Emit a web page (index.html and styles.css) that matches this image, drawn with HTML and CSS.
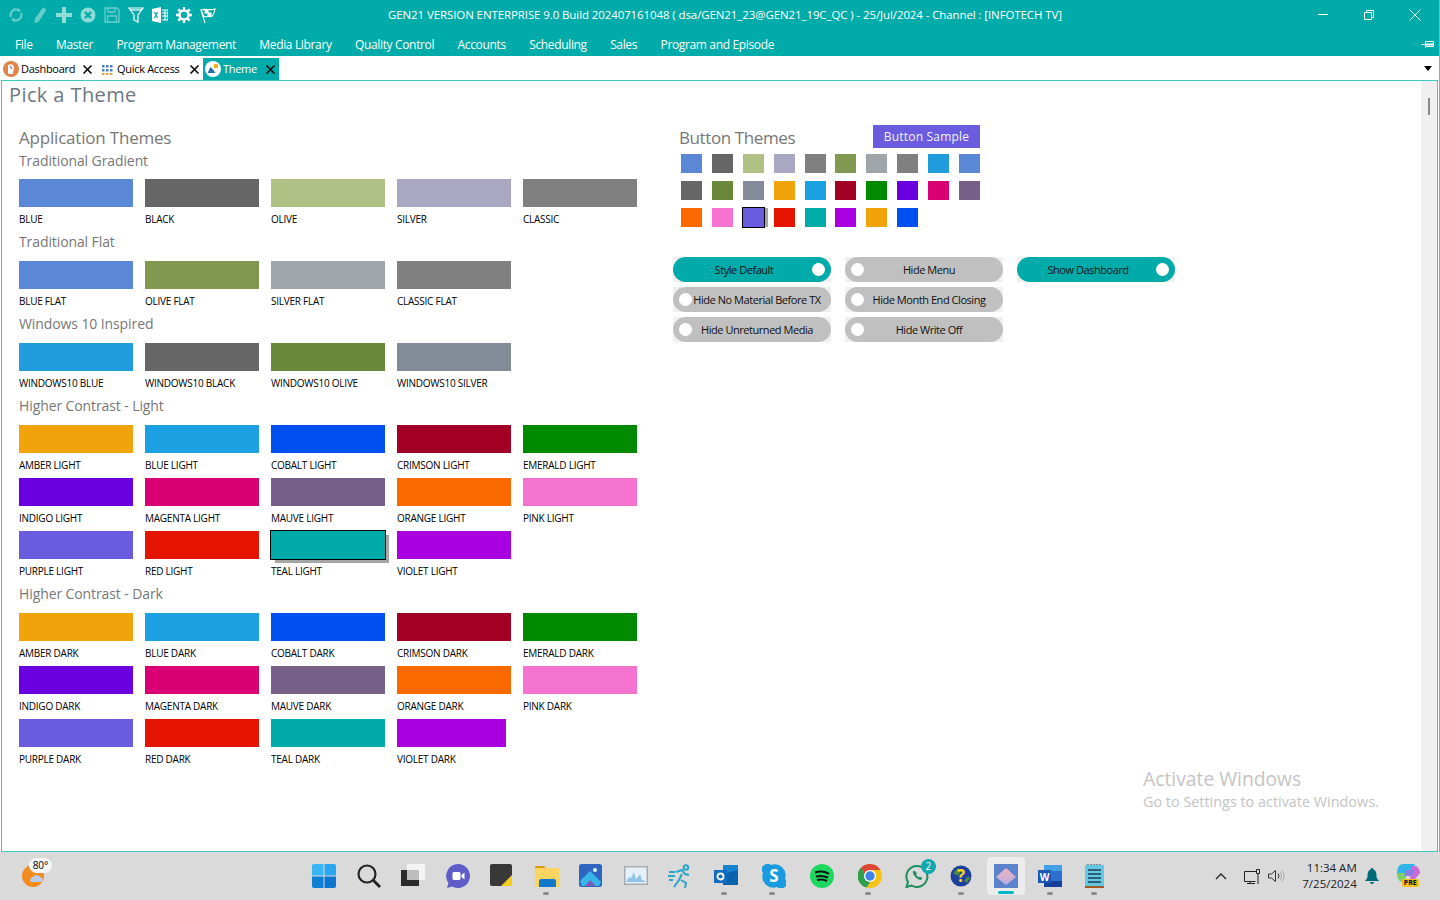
FILE: index.html
```html
<!DOCTYPE html>
<html lang="en">
<head>
<meta charset="utf-8">
<title>Theme</title>
<link rel="stylesheet" href="styles.css">
</head>
<body>
<div class="app">
  <header class="titlebar">
    <div class="tools">
      <svg class="tool" viewBox="0 0 16 16" fill="none" stroke="#66cdcb" stroke-width="2.2"><path d="M3 10a5.5 5.5 0 0 1 8.5-6.3"/><path d="M13 6a5.5 5.5 0 0 1-8.5 6.3"/><path d="M10 1l3 3-3.6 1z" fill="#66cdcb" stroke="none"/><path d="M6 15l-3-3 3.6-1z" fill="#66cdcb" stroke="none"/></svg>
      <svg class="tool" viewBox="0 0 16 16" fill="#66cdcb"><path d="M11 .5l3.500 2-8 12.500-4 1 .5-4.500z"/></svg>
      <svg class="tool" viewBox="0 0 16 16" fill="#8fdcd9"><path d="M6 0h4v6h6v4h-6v6H6v-6H0V6h6z"/></svg>
      <svg class="tool" viewBox="0 0 16 16"><circle cx="8" cy="8" r="7.5" fill="#8fdcd9"/><path d="M5 5l6 6M11 5l-6 6" stroke="#00aba9" stroke-width="2.4"/></svg>
      <svg class="tool" viewBox="0 0 16 16" fill="none" stroke="#66cdcb" stroke-width="1.3"><path d="M1 1h12l2 2v12H1z"/><path d="M4 1v4h7V1M3.500 15V9h9v6"/></svg>
      <svg class="tool" viewBox="0 0 16 16" fill="none" stroke="#fff" stroke-width="1.2"><path d="M1 1h14L10 8v7l-4-2V8z"/><path d="M3 3h10"/></svg>
      <svg class="tool" viewBox="0 0 16 16"><path d="M0 2l9-2v16l-9-2z" fill="#fff"/><path d="M2.500 5l3 6M5.500 5l-3 6" stroke="#00aba9" stroke-width="1.2"/><path d="M10 3h6v10h-6M10 6h6M10 9h6M13 3v10" fill="none" stroke="#fff" stroke-width="1.1"/></svg>
      <svg class="tool" viewBox="0 0 16 16"><circle cx="8" cy="8" r="4.500" fill="none" stroke="#fff" stroke-width="2.600"/><path d="M8 0v3M8 13v3M0 8h3M13 8h3M2.300 2.300l2 2M11.700 11.700l2 2M13.700 2.300l-2 2M4.300 11.700l-2 2" stroke="#fff" stroke-width="2.400"/></svg>
      <svg class="tool" viewBox="0 0 16 16" fill="none" stroke="#fff" stroke-width="1.1"><path d="M1 3c4-2 9 1 14-1-.5 3-1.200 5-2.500 7-3 1-6 0-8.500 1z"/><path d="M1 3l4 13"/><path d="M5 3.500h3v2.500h-3zM8 6h3v2.500h-3z" fill="#fff"/></svg>
    </div>
    <div class="app-title">GEN21 VERSION ENTERPRISE 9.0 Build 202407161048 ( dsa/GEN21_23@GEN21_19C_QC ) - 25/Jul/2024 - Channel : [INFOTECH TV]</div>
    <div class="win-controls">
      <svg class="win-btn" viewBox="0 0 12 12" stroke="#fff" fill="none"><path d="M1 5.500h10"/></svg>
      <svg class="win-btn" viewBox="0 0 12 12" stroke="#fff" fill="none"><path d="M1.500 3.500h7v7h-7zM3.500 3.500v-2h7v7h-2"/></svg>
      <svg class="win-btn" viewBox="0 0 12 12" stroke="#e0f5f4" fill="none"><path d="M.5.5l11 11M11.500.5l-11 11"/></svg>
    </div>
  </header>
  <nav class="menubar">
    <span>File</span><span>Master</span><span>Program Management</span><span>Media Library</span><span>Quality Control</span><span>Accounts</span><span>Scheduling</span><span>Sales</span><span>Program and Episode</span>
    <svg class="pin" viewBox="0 0 13 8" fill="none" stroke="#fff"><path d="M0 4.500h4M4.500 1v7M4.500 1.500h8v5h-8" /><path d="M5 4.500h7" stroke-width="2"/></svg>
  </nav>
  <div class="tabbar">
    <div class="tab tab-dash">
      <svg class="tab-icon" viewBox="0 0 16 16"><circle cx="8" cy="8" r="8" fill="#e38344"/><path d="M5 13V4l4-1 2 3-1 7z" fill="#fff"/><path d="M7.500 5l1 3" stroke="#557" stroke-width="1"/></svg>
      <span class="tab-text">Dashboard</span><svg class="tab-x" viewBox="0 0 9 9" stroke="#000" stroke-width="1.500" fill="none"><path d="M.5.5l8 8M8.500.5l-8 8"/></svg>
    </div>
    <div class="tab tab-quick">
      <svg class="tab-icon small" viewBox="0 0 11 11" fill="#4a7fc4"><path d="M0 1h2.500v2.500H0zM4 1h2.500v2.500H4zM8 1h2.500v2.500H8zM0 5h2.500v2.500H0zM4 5h2.500v2.500H4zM8 5h2.500v2.500H8z"/><path fill="#d9a14a" d="M0 9h2.500v2H0zM4 9h2.500v2H4zM8 9h2.500v2H8z"/></svg>
      <span class="tab-text">Quick Access</span><svg class="tab-x" viewBox="0 0 9 9" stroke="#000" stroke-width="1.500" fill="none"><path d="M.5.5l8 8M8.500.5l-8 8"/></svg>
    </div>
    <div class="tab tab-theme">
      <svg class="tab-icon" viewBox="0 0 16 16"><circle cx="8" cy="8" r="8" fill="#fff"/><path d="M2.500 12l3-6 3 3 2 3z" fill="#2f6db5"/><path d="M9 3h4v4H9z" fill="#f1b31c"/></svg>
      <span class="tab-text">Theme</span><svg class="tab-x" viewBox="0 0 9 9" stroke="#000" stroke-width="1.500" fill="none"><path d="M.5.5l8 8M8.500.5l-8 8"/></svg>
    </div>
    <svg class="tab-menu" viewBox="0 0 8 5" fill="#000"><path d="M0 0h8L4 5z"/></svg>
  </div>
  <main class="frame">
    <div class="content">
      <h1 class="page-title">Pick a Theme</h1>
      <div class="columns">
        <section class="col-left">
          <h2 class="heading">Application Themes</h2>
          <h3 class="sub sub-first">Traditional Gradient</h3>
          <div class="grid">
            <div class="item"><div class="sw blue"></div><div class="lbl">BLUE</div></div>
            <div class="item"><div class="sw black"></div><div class="lbl">BLACK</div></div>
            <div class="item"><div class="sw olive"></div><div class="lbl">OLIVE</div></div>
            <div class="item"><div class="sw silver"></div><div class="lbl">SILVER</div></div>
            <div class="item"><div class="sw classic"></div><div class="lbl">CLASSIC</div></div>
          </div>
          <h3 class="sub">Traditional Flat</h3>
          <div class="grid">
            <div class="item"><div class="sw blue"></div><div class="lbl">BLUE FLAT</div></div>
            <div class="item"><div class="sw olive-flat"></div><div class="lbl">OLIVE FLAT</div></div>
            <div class="item"><div class="sw silver-flat"></div><div class="lbl">SILVER FLAT</div></div>
            <div class="item"><div class="sw classic"></div><div class="lbl">CLASSIC FLAT</div></div>
          </div>
          <h3 class="sub">Windows 10 Inspired</h3>
          <div class="grid">
            <div class="item"><div class="sw win-blue"></div><div class="lbl">WINDOWS10 BLUE</div></div>
            <div class="item"><div class="sw black"></div><div class="lbl">WINDOWS10 BLACK</div></div>
            <div class="item"><div class="sw win-olive"></div><div class="lbl">WINDOWS10 OLIVE</div></div>
            <div class="item"><div class="sw win-silver"></div><div class="lbl">WINDOWS10 SILVER</div></div>
          </div>
          <h3 class="sub">Higher Contrast - Light</h3>
          <div class="grid">
            <div class="item"><div class="sw amber"></div><div class="lbl">AMBER LIGHT</div></div>
            <div class="item"><div class="sw sky"></div><div class="lbl">BLUE LIGHT</div></div>
            <div class="item"><div class="sw cobalt"></div><div class="lbl">COBALT LIGHT</div></div>
            <div class="item"><div class="sw crimson"></div><div class="lbl">CRIMSON LIGHT</div></div>
            <div class="item"><div class="sw emerald"></div><div class="lbl">EMERALD LIGHT</div></div>
            <div class="item"><div class="sw indigo"></div><div class="lbl">INDIGO LIGHT</div></div>
            <div class="item"><div class="sw magenta"></div><div class="lbl">MAGENTA LIGHT</div></div>
            <div class="item"><div class="sw mauve"></div><div class="lbl">MAUVE LIGHT</div></div>
            <div class="item"><div class="sw orange"></div><div class="lbl">ORANGE LIGHT</div></div>
            <div class="item"><div class="sw pink"></div><div class="lbl">PINK LIGHT</div></div>
            <div class="item"><div class="sw purple"></div><div class="lbl">PURPLE LIGHT</div></div>
            <div class="item"><div class="sw red"></div><div class="lbl">RED LIGHT</div></div>
            <div class="item"><div class="sw teal selected"></div><div class="lbl">TEAL LIGHT</div></div>
            <div class="item"><div class="sw violet"></div><div class="lbl">VIOLET LIGHT</div></div>
          </div>
          <h3 class="sub">Higher Contrast - Dark</h3>
          <div class="grid">
            <div class="item"><div class="sw amber"></div><div class="lbl">AMBER DARK</div></div>
            <div class="item"><div class="sw sky"></div><div class="lbl">BLUE DARK</div></div>
            <div class="item"><div class="sw cobalt"></div><div class="lbl">COBALT DARK</div></div>
            <div class="item"><div class="sw crimson"></div><div class="lbl">CRIMSON DARK</div></div>
            <div class="item"><div class="sw emerald"></div><div class="lbl">EMERALD DARK</div></div>
            <div class="item"><div class="sw indigo"></div><div class="lbl">INDIGO DARK</div></div>
            <div class="item"><div class="sw magenta"></div><div class="lbl">MAGENTA DARK</div></div>
            <div class="item"><div class="sw mauve"></div><div class="lbl">MAUVE DARK</div></div>
            <div class="item"><div class="sw orange"></div><div class="lbl">ORANGE DARK</div></div>
            <div class="item"><div class="sw pink"></div><div class="lbl">PINK DARK</div></div>
            <div class="item"><div class="sw purple"></div><div class="lbl">PURPLE DARK</div></div>
            <div class="item"><div class="sw red"></div><div class="lbl">RED DARK</div></div>
            <div class="item"><div class="sw teal"></div><div class="lbl">TEAL DARK</div></div>
            <div class="item"><div class="sw violet narrow"></div><div class="lbl">VIOLET DARK</div></div>
          </div>
        </section>
        <section class="col-right">
          <div class="btn-head">
            <h2 class="heading heading-btn">Button Themes</h2>
            <div class="btn-sample">Button Sample</div>
          </div>
          <div class="mini-grid">
            <div class="sw blue"></div><div class="sw black"></div><div class="sw olive"></div><div class="sw silver"></div><div class="sw classic"></div><div class="sw olive-flat"></div><div class="sw silver-flat"></div><div class="sw classic"></div><div class="sw win-blue"></div><div class="sw blue"></div>
            <div class="sw black"></div><div class="sw win-olive"></div><div class="sw win-silver"></div><div class="sw amber"></div><div class="sw sky"></div><div class="sw crimson"></div><div class="sw emerald"></div><div class="sw indigo"></div><div class="sw magenta"></div><div class="sw mauve"></div>
            <div class="sw orange"></div><div class="sw pink"></div><div class="sw purple selected"></div><div class="sw red"></div><div class="sw teal"></div><div class="sw violet"></div><div class="sw amber"></div><div class="sw cobalt"></div>
          </div>
          <div class="toggles">
            <div class="toggle"><div class="pill on"><span class="t-text">Style Default</span><span class="knob"></span></div></div>
            <div class="toggle"><div class="pill"><span class="knob"></span><span class="t-text">Hide Menu</span></div></div>
            <div class="toggle"><div class="pill on"><span class="t-text">Show Dashboard</span><span class="knob"></span></div></div>
            <div class="toggle"><div class="pill"><span class="knob"></span><span class="t-text">Hide No Material Before TX</span></div></div>
            <div class="toggle"><div class="pill"><span class="knob"></span><span class="t-text">Hide Month End Closing</span></div></div>
            <div class="toggle-gap"></div>
            <div class="toggle"><div class="pill"><span class="knob"></span><span class="t-text">Hide Unreturned Media</span></div></div>
            <div class="toggle"><div class="pill"><span class="knob"></span><span class="t-text">Hide Write Off</span></div></div>
          </div>
        </section>
      </div>
    </div>
    <div class="scrollbar"><div class="thumb"></div></div>
    <div class="watermark">
      <div class="wm-1">Activate Windows</div>
      <div class="wm-2">Go to Settings to activate Windows.</div>
    </div>
  </main>
  <footer class="taskbar">
    <div class="weather">
      <svg class="weather-icon" viewBox="0 0 24 22"><circle cx="11" cy="11" r="11" fill="#f28c1e"/><path d="M9 17a3 3 0 0 1 2-5 4 4 0 0 1 7 0 3 3 0 0 1 2 5z" fill="#b7cdea"/></svg>
      <span class="temp">80°</span>
    </div>
    <div class="tasks">
      <div class="task"><svg viewBox="0 0 24 24"><path d="M0 2a2 2 0 0 1 2-2h9.500v11.500H0z" fill="#3ab6f4"/><path d="M12.500 0H22a2 2 0 0 1 2 2v9.500H12.500z" fill="#2aa5ef"/><path d="M0 12.500h11.500V24H2a2 2 0 0 1-2-2z" fill="#0f7fd6"/><path d="M12.500 12.500H24V22a2 2 0 0 1-2 2h-9.500z" fill="#0b75cf"/></svg></div>
      <div class="task"><svg viewBox="0 0 24 24" fill="none" stroke="#222" stroke-width="2.200"><circle cx="10" cy="10" r="8.500"/><path d="M16 16l7 7" stroke-width="2.800"/></svg></div>
      <div class="task"><svg viewBox="0 0 24 24"><path d="M6 0h18v16H6z" fill="#f4f4f4"/><path d="M0 6h18v16H0z" fill="#2b2b2b"/><path d="M6 6h12v10H6z" fill="#bdbdbd"/></svg></div>
      <div class="task"><svg viewBox="0 0 24 24"><path d="M12 0a12 12 0 1 1-6 22.400L1 24l1.500-5A12 12 0 0 1 12 0z" fill="#5f5bc7"/><rect x="6.500" y="8" width="8" height="8" rx="1.500" fill="#fff"/><path d="M15.500 11l3-2.500v7l-3-2.500z" fill="#fff"/></svg></div>
      <div class="task"><svg viewBox="0 0 24 24"><rect width="22" height="22" rx="2" fill="#383838"/><path d="M11 22L22 11v11z" fill="#f5ce1a"/></svg></div>
      <div class="task dot"><svg viewBox="0 0 24 24"><path d="M0 3a1 1 0 0 1 1-1h8l2 2h-11z" fill="#d99a10"/><path d="M0 4h24v19H0z" fill="#fcd462"/><path d="M4 17a2 2 0 0 1 2-2h13a2 2 0 0 1 2 2v6H4z" fill="#0f78c8"/></svg></div>
      <div class="task"><svg viewBox="0 0 24 24"><rect width="23" height="23" y="0" rx="2.500" fill="#2f65c0"/><circle cx="16" cy="6" r="2" fill="#dff"/><path d="M1 17L11 7l11 11-2 4H3z" fill="#38b6ea"/><path d="M6 22l5-6 6 6z" fill="#7a5cba"/></svg></div>
      <div class="task"><svg viewBox="0 0 24 24"><rect y="2" width="24" height="19" fill="#a9acaf"/><rect x="1.500" y="3.500" width="21" height="16" fill="#e6f0fb"/><path d="M2 18l3-5 2 1 3-6 2 7 2-2 2-3 2 6 3 1v1H2z" fill="#8ec4ec"/></svg></div>
      <div class="task"><svg viewBox="0 0 24 24" fill="none" stroke="#2ba5c8" stroke-width="2"><circle cx="18" cy="3.500" r="2.200"/><path d="M8 8l6-2 3 4 4 1M14 10l-3 6-5 7M13 16l5 3-1 5M1 8h6M0 12h7M1 16h4"/></svg></div>
      <div class="task dot wide"><svg viewBox="0 0 24 24"><path d="M9 1h15v20H9z" fill="#1385d0"/><path d="M9 10l15-4v15H9z" fill="#0a62ad"/><rect y="6" width="13" height="13" fill="#0f6cc0"/><circle cx="6.500" cy="12.500" r="3" fill="none" stroke="#fff" stroke-width="1.800"/></svg></div>
      <div class="task dot wide"><svg viewBox="0 0 24 24"><path d="M5 0a5 5 0 0 1 4 1 11 11 0 0 1 14 14 5.500 5.500 0 0 1-8 8A11 11 0 0 1 1 9a5.500 5.500 0 0 1 4-9z" fill="#1a9be0"/><text class="sk" x="12" y="18" text-anchor="middle">S</text></svg></div>
      <div class="task wide"><svg viewBox="0 0 24 24"><circle cx="12" cy="12" r="12" fill="#1ed760"/><path d="M5 8.500c5-1.500 10-1 14 1.300M6 12.500c4.500-1 8.500-.7 12 1.200M7 16c3.500-.8 7-.5 10 1" fill="none" stroke="#111" stroke-width="2"/></svg></div>
      <div class="task dot wide"><svg viewBox="0 0 24 24"><circle cx="12" cy="12" r="12" fill="#f3c416"/><path d="M12 0a12 12 0 0 1 10.500 6H12a6 6 0 0 0-5.500 3.500L3 3.500A12 12 0 0 1 12 0z" fill="#de4438"/><path d="M3 3.500l6 10.500 3 4-3.500 5.500A12 12 0 0 1 3 3.500z" fill="#2f9e4f"/><circle cx="12" cy="12" r="6" fill="#fff"/><circle cx="12" cy="12" r="4.700" fill="#3d82e6"/></svg></div>
      <div class="task badge-host"><svg viewBox="0 0 24 24" fill="none" stroke="#1b8f5f" stroke-width="2"><path d="M12 2a10.500 10.500 0 1 1-5.500 19.500L1.500 23l1.500-5A10.500 10.500 0 0 1 12 2z"/><path d="M8 7c-1 3 4 9 8 9l1.500-2-3-1.500-1 1-2.500-3 1-1L10 7z" fill="#1b8f5f" stroke="none"/></svg><span class="badge">2</span></div>
      <div class="task dot"><svg class="help-icon" viewBox="0 0 24 24"><circle cx="12" cy="12" r="10.500" fill="#1d3f9f"/><path d="M4 9l5-5 3 3-3 5zM15 17l4-5 2 2-3 5z" fill="#4b8b3b"/><text class="help" x="12" y="18" text-anchor="middle">?</text></svg></div>
      <div class="task active"><svg viewBox="0 0 24 24"><defs><linearGradient id="diamond" x1="0" y1="0" x2="0" y2="1"><stop offset="0" stop-color="#f0b6c0"/><stop offset="1" stop-color="#b9aee0"/></linearGradient></defs><rect width="24" height="24" fill="#5b84cc"/><path d="M12 4l10 9-10 8-10-8z" fill="url(#diamond)"/></svg></div>
      <div class="task dot"><svg viewBox="0 0 24 24"><path d="M6 1h18v22H6z" fill="#2f6fd0"/><path d="M6 1h18v6H6z" fill="#41a0e8"/><path d="M6 17h18v6H6z" fill="#163f9a"/><rect y="6" width="13" height="13" fill="#1d55b5"/><text class="wd" x="6.500" y="16.500" text-anchor="middle">W</text></svg></div>
      <div class="task dot"><svg viewBox="0 0 24 24"><rect x="2" y="1" width="19" height="21" fill="#62c8e4"/><path d="M2 22h19v2H2z" fill="#a35a22"/><path d="M5 1V0M8 1V0M11 1V0M14 1V0M17 1V0" stroke="#333"/><path d="M5 6h13M5 10h13M5 14h13M5 18h13" stroke="#1c3c52" stroke-width="1.400"/></svg></div>
    </div>
    <div class="tray">
      <svg class="tray-chev" viewBox="0 0 12 7" fill="none" stroke="#222" stroke-width="1.300"><path d="M1 6l5-5 5 5"/></svg>
      <svg class="tray-net" viewBox="0 0 17 16" fill="none" stroke="#222"><path d="M12 3.500H.5v10h11M6 14v1.500M3 15.500h8M14 5v11M12.500 1.500h3v4h-3z"/></svg>
      <svg class="tray-vol" viewBox="0 0 17 14" fill="none" stroke="#333"><path d="M.5 5v4h3l4 3.500v-11l-4 3.500z"/><path d="M10 4.500a4 4 0 0 1 0 5" /><path d="M12 3a6.500 6.500 0 0 1 0 8M14 1.500a9 9 0 0 1 0 11" stroke="#aaa"/></svg>
      <div class="clock"><div>11:34 AM</div><div>7/25/2024</div></div>
      <svg class="tray-bell" viewBox="0 0 14 16" fill="#006a78"><path d="M7 0a1.500 1.500 0 0 1 1.500 1.500C11 2.500 11.500 5 11.500 8c0 2 1 3.500 2.500 4.500v.5H0v-.5C1.500 11.500 2.500 10 2.500 8c0-3 .5-5.500 3-6.500A1.500 1.500 0 0 1 7 0zM5 14h4a2 2 0 0 1-4 0z"/></svg>
      <div class="copilot">
        <svg viewBox="0 0 24 18"><path d="M7 0h12l-4 9H1C1 4 3 0 7 0z" fill="#2fb6e8"/><path d="M1 9h10l-2 9H6c-3 0-5-4-5-9z" fill="#7fcf6a"/><path d="M15 2h4c3 0 5 4 5 7l-5 6h-5z" fill="#c86ad8"/><path d="M10 6h8l-2 6h-8z" fill="#8b7ce6"/></svg>
        <span class="pre">PRE</span>
      </div>
    </div>
  </footer>
</div>
</body>
</html>
```
FILE: styles.css
```css
* { box-sizing: border-box; margin: 0; padding: 0; }
html, body { width: 1440px; height: 900px; overflow: hidden; background: #fff; }
body { font-family: "Open Sans", "Noto Sans", sans-serif; color: #000; }
.app { display: flex; flex-direction: column; height: 900px; border-right: 1px solid #7fb5b4; }

.titlebar { height: 32px; background: #00aba9; display: flex; align-items: center; color: #fff; padding-bottom: 2px; }
.tools { display: flex; width: 388px; padding-left: 8px; gap: 8px; }
.tool { width: 16px; height: 16px; display: block; }
.app-title { font-size: 11.5px; width: 673px; white-space: nowrap; letter-spacing: -0.1px; margin-top: -1px; }
.win-controls { margin-left: auto; display: flex; align-items: center; gap: 34px; padding-right: 18px; }
.win-btn { width: 12px; height: 12px; }

.menubar { height: 24px; background: #00aba9; color: #fff; display: flex; align-items: center; gap: 23.4px; padding-left: 15px; font-size: 12px; letter-spacing: -0.35px; }
.pin { width: 13px; height: 8px; margin-left: auto; margin-right: 5px; }

.tabbar { height: 24px; background: #fff; display: flex; align-items: flex-end; font-size: 11px; letter-spacing: -0.3px; }
.tab { height: 22px; display: flex; align-items: center; }
.tab-dash { width: 96px; padding-left: 3px; }
.tab-quick { width: 104px; padding-left: 6px; }
.tab-theme { width: 76px; padding-left: 2px; background: #00aba9; color: #fff; margin-left: 3px; }
.tab-icon { width: 16px; height: 16px; flex: none; margin-right: 2px; }
.tab-icon.small { width: 11px; height: 11px; margin-right: 4px; }
.tab-text { flex: 1; white-space: nowrap; padding-bottom: 2px; }
.tab-x { width: 9px; height: 9px; flex: none; margin-right: 4.5px; }
.tab-quick .tab-x { margin-right: 1.5px; }
.tab-menu { width: 8px; height: 5px; margin: 0 7px 9px auto; }

.frame { height: 772px; margin: 0 1px 0 1px; border: 1px solid #40c9c3; display: flex; position: relative; }
.content { flex: 1; min-width: 0; padding-left: 7px; }
.scrollbar { width: 16px; background: #f0f0f0; padding: 17px 0 0 7px; }
.thumb { width: 2px; height: 17px; background: #8a8a8a; }

.page-title { font-size: 20px; font-weight: 400; line-height: 28px; color: #6e7780; letter-spacing: .4px; margin-bottom: 17px; }
.columns { display: flex; }
.col-left { width: 664px; padding-left: 10px; flex: none; }
.heading { font-size: 17px; font-weight: 400; line-height: 24px; color: #777; letter-spacing: -0.2px; }
.sub { font-size: 14px; font-weight: 400; line-height: 20px; color: #777; margin-bottom: 9px; height: 20px; letter-spacing: -0.1px; }
.sub-first { margin-bottom: 8px; margin-top: 1px; }
.grid { display: grid; grid-template-columns: repeat(5, 114px); column-gap: 12px; }
.item { height: 53px; }
.item .sw { height: 28px; }
.lbl { font-size: 10px; line-height: 25px; color: #000; white-space: nowrap; letter-spacing: -0.25px; }

.sw.narrow { width: 109px; }
.sw.selected { outline: 1px solid #000; box-shadow: 4px 4px 0 #a6a6a6; }
.mini-grid .sw.selected { box-shadow: 4px 0 0 #a6a6a6; }
.blue { background: #5a87d6; }
.black { background: #666; }
.olive { background: #b1c085; }
.silver { background: #a9a7c1; }
.classic { background: #808080; }
.olive-flat { background: #80984f; }
.silver-flat { background: #a0a5aa; }
.win-blue { background: #219ddd; }
.win-olive { background: #6a883a; }
.win-silver { background: #838b98; }
.amber { background: #f0a30a; }
.sky { background: #1ba1e2; }
.cobalt { background: #0050ef; }
.crimson { background: #a20025; }
.emerald { background: #008a00; }
.indigo { background: #6a00df; }
.magenta { background: #d80073; }
.mauve { background: #76608a; }
.orange { background: #fa6800; }
.pink { background: #f472d0; }
.purple { background: #6a5bdf; }
.red { background: #e51400; }
.teal { background: #00aba9; }
.violet { background: #a800e0; }

.col-right { width: 600px; flex: none; margin-top: -1px; }
.btn-head { display: flex; height: 23px; align-items: flex-start; margin-bottom: 6px; }
.heading-btn { width: 200px; padding-left: 6px; margin-top: 1px; letter-spacing: -0.4px; }
.btn-sample { width: 107px; height: 23px; background: #6a5bdf; color: #f4f4ff; font-size: 12px; line-height: 23px; text-align: center; letter-spacing: .2px; }
.mini-grid { display: grid; grid-template-columns: repeat(10, 21px); column-gap: 9.9px; row-gap: 8px; padding-left: 8px; }
.mini-grid .sw { height: 19px; }
.toggles { display: grid; grid-template-columns: repeat(3, 158px); grid-auto-rows: 25px; column-gap: 14px; row-gap: 5px; margin-top: 30px; }
.toggle { background: #f0f0f0; }
.pill { height: 25px; border-radius: 13px; background: #c0c0c0; display: flex; align-items: center; padding: 0 9px 0 6px; }
.pill.on { background: #00aba9; padding: 0 6px 0 3px; }
.knob { width: 13px; height: 13px; border-radius: 50%; background: #fff; flex: none; }
.t-text { flex: 1; text-align: center; font-size: 11px; letter-spacing: -0.45px; white-space: nowrap; color: #111; }

.watermark { position: absolute; left: 1141px; top: 686px; color: #c4c4c4; white-space: nowrap; }
.wm-1 { font-size: 19.3px; line-height: 24px; }
.wm-2 { font-size: 14.4px; line-height: 21px; }

.taskbar { flex: 1; background: #dadada; display: flex; align-items: center; margin-right: -1px; }
.weather { width: 301.75px; padding-left: 22px; position: relative; flex: none; }
.weather-icon { width: 24px; height: 22px; display: block; }
.temp { position: absolute; left: 29px; top: -7px; width: 23px; height: 15px; background: #f6f6f6; border-radius: 8px; font-size: 10px; line-height: 15px; text-align: center; }
.tasks { display: flex; align-items: center; flex: none; }
.task { width: 44.5px; height: 48px; display: flex; align-items: center; justify-content: center; position: relative; flex: none; }
.task.wide { width: 48px; }
.task svg { width: 24px; height: 24px; }
.task.dot::after { content: ""; position: absolute; left: 19px; bottom: 5px; width: 6px; height: 3px; border-radius: 2px; background: #8c8c8c; }
.task.active { width: 38px; height: 38px; margin: 0 3.25px; background: #ececec; border-radius: 4px; }
.task.active::after { content: ""; position: absolute; left: 11px; bottom: 1px; width: 16px; height: 3px; border-radius: 2px; background: #00b7c3; }
.badge { position: absolute; right: 3px; top: 7px; width: 15px; height: 15px; border-radius: 50%; background: #12a6b0; color: #fff; font-size: 10px; line-height: 15px; text-align: center; }
.sk { font-size: 17px; font-weight: 700; fill: #fff; font-family: "Open Sans", sans-serif; }
.help { font-size: 17px; font-weight: 700; fill: #f6d81e; font-family: "Open Sans", sans-serif; }
.wd { font-size: 10px; font-weight: 700; fill: #fff; font-family: "Open Sans", sans-serif; }
.tray { flex: 1; display: flex; align-items: center; min-width: 0; }
.tray-chev { width: 12px; height: 7px; margin-left: 98px; }
.tray-net { width: 17px; height: 16px; margin-left: 17px; }
.tray-vol { width: 17px; height: 14px; margin-left: 7px; }
.clock { width: 72px; text-align: right; font-size: 11.5px; line-height: 16px; color: #222; }
.tray-bell { width: 14px; height: 16px; margin-left: 8px; }
.copilot { width: 24px; height: 24px; margin-left: 17px; position: relative; }
.copilot svg { width: 24px; height: 18px; display: block; }
.pre { position: absolute; left: 6px; top: 15px; background: #f4c20d; border-radius: 2px; font-size: 7px; font-weight: 700; line-height: 8px; padding: 0 2px; color: #000; }
```
